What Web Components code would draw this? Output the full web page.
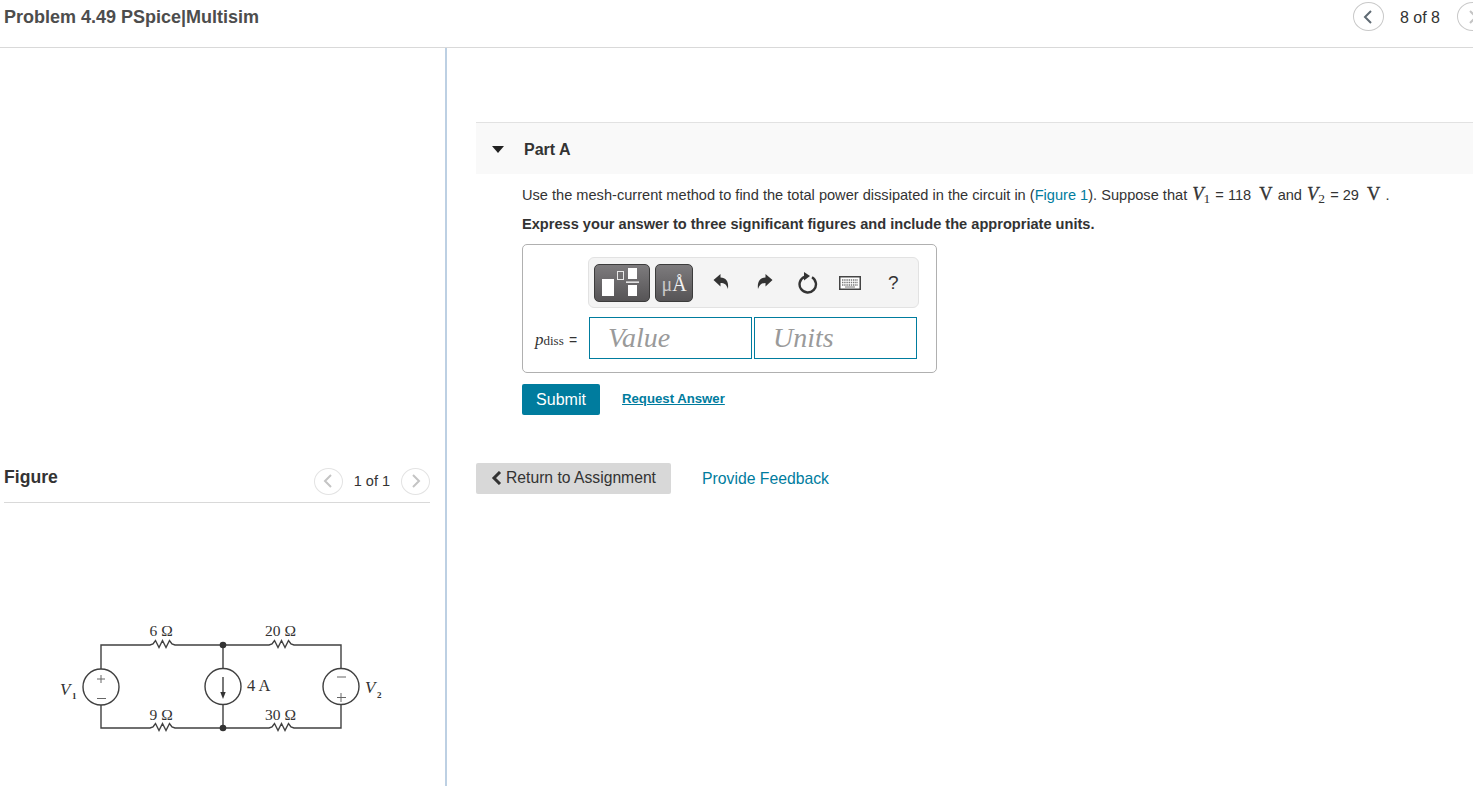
<!DOCTYPE html>
<html>
<head>
<meta charset="utf-8">
<title>Problem 4.49</title>
<style>
  html, body { margin: 0; height: 100%; overflow: hidden; background: #fff; }
  body { font-family: "Liberation Sans", Arial, sans-serif; color: #333; }
</style>
</head>
<body>
<problem-page></problem-page>

<script>
class PagerControl extends HTMLElement {
  connectedCallback() {
    const big = this.hasAttribute('big');
    const prevColor = big ? '#5f6a73' : '#c4c4c4';
    this.attachShadow({ mode: 'open' });
    this.shadowRoot.innerHTML = `
      <style>
        :host { display: flex; align-items: center; }
        .btn {
          box-sizing: border-box;
          width: ${big ? 31 : 29}px;
          height: ${big ? 29 : 27}px;
          border: 1px solid ${big ? '#c9c9c9' : '#e3e3e3'};
          border-radius: 50%;
          background: #fff;
          display: flex;
          align-items: center;
          justify-content: center;
          flex: none;
        }
        .label {
          font-size: ${big ? 16 : 14.5}px;
          color: #333;
          margin: ${big ? '2px 17px 0 16px' : '0 11px'};
          white-space: nowrap;
        }
        svg { display: block; }
      </style>
      <div class="btn"><svg width="10" height="16" viewBox="0 0 10 16"><path d="M8 2 L2 8 L8 14" fill="none" stroke="${prevColor}" stroke-width="2"/></svg></div>
      <span class="label">${this.getAttribute('label')}</span>
      <div class="btn"><svg width="10" height="16" viewBox="0 0 10 16"><path d="M2 2 L8 8 L2 14" fill="none" stroke="#c4c4c4" stroke-width="2"/></svg></div>
    `;
  }
}
customElements.define('pager-control', PagerControl);

class TopBar extends HTMLElement {
  connectedCallback() {
    this.attachShadow({ mode: 'open' });
    this.shadowRoot.innerHTML = `
      <style>
        :host {
          display: flex;
          justify-content: space-between;
          box-sizing: border-box;
          height: 48px;
          padding: 2px 0 0 4px;
          border-bottom: 1px solid #d9d9d9;
          overflow: hidden;
        }
        .title { font-size: 18px; font-weight: bold; color: #4d4d4d; line-height: 31px; white-space: nowrap; }
        pager-control { flex: none; margin-right: -15px; align-self: flex-start; }
      </style>
      <div class="title"><slot></slot></div>
      <pager-control big label="8 of 8"></pager-control>
    `;
  }
}
customElements.define('top-bar', TopBar);

class CircuitFigure extends HTMLElement {
  connectedCallback() {
    // resistor zigzag starting at the wire, drawn relative to its left end
    const zig = 'l3 -1 l2.5 -3.5 l3.5 7 l3.5 -7 l3.5 7 l3.5 -7 l2.5 3.5 l3 1';
    this.attachShadow({ mode: 'open' });
    this.shadowRoot.innerHTML = `
      <style>
        :host { display: block; width: 445px; height: 186px; }
        svg { display: block; }
        text { font-family: "Liberation Serif", "Times New Roman", serif; fill: #333; font-size: 15.5px; }
        .big { font-size: 16.5px; }
        .var { font-style: italic; font-size: 17px; }
        .sub { font-size: 9px; font-weight: bold; }
        .w { fill: none; stroke: #404040; stroke-width: 1.4; }
        .thin { fill: none; stroke: #666; stroke-width: 1; }
      </style>
      <svg width="445" height="186" viewBox="0 600 445 186">
        <path class="w" d="M101 669 V645 H150 ${zig} H269 ${zig} H341 V668"/>
        <path class="w" d="M101 705 V728 H150 ${zig} H269 ${zig} H341 V705"/>
        <path class="w" d="M223 645 V668 M223 705 V728"/>
        <circle class="w" cx="101" cy="687" r="18"/>
        <circle class="w" cx="223" cy="686.5" r="18"/>
        <circle class="w" cx="341" cy="686.5" r="18"/>
        <circle cx="223" cy="645" r="3.3" fill="#333"/>
        <circle cx="223" cy="728" r="3.3" fill="#333"/>
        <path class="thin" d="M97 679 h8 M101 675 v8 M97 698.5 h9 M337 677 h9 M337 697.5 h9 M341 693 v9"/>
        <path class="w" d="M223 677 V696"/>
        <path d="M220.3 692 L223 699 L225.7 692 Z" fill="#333"/>
        <text x="149.5" y="636">6 Ω</text>
        <text x="149.5" y="720">9 Ω</text>
        <text x="265" y="636">20 Ω</text>
        <text x="265" y="720">30 Ω</text>
        <text class="big" x="247" y="691">4 A</text>
        <text class="var" x="60" y="695">V</text>
        <text class="sub" x="72" y="699">1</text>
        <text class="var" x="365" y="693">V</text>
        <text class="sub" x="377" y="698">2</text>
      </svg>
    `;
  }
}
customElements.define('circuit-figure', CircuitFigure);

class FigurePanel extends HTMLElement {
  connectedCallback() {
    this.attachShadow({ mode: 'open' });
    this.shadowRoot.innerHTML = `
      <style>
        :host { display: block; box-sizing: border-box; width: 447px; border-right: 2px solid #bdd0e3; padding-top: 418px; height: 738px; overflow: hidden; }
        .head {
          display: flex;
          justify-content: space-between;
          align-items: center;
          box-sizing: border-box;
          width: 426px;
          margin-left: 4px;
          height: 37px;
          border-bottom: 1px solid #d9d9d9;
          padding-bottom: 6px;
        }
        .name { font-size: 17.6px; font-weight: bold; color: #333; margin-top: -8px; }
        .gap { height: 97px; }
      </style>
      <div class="head">
        <span class="name">Figure</span>
        <pager-control label="1 of 1"></pager-control>
      </div>
      <div class="gap"></div>
      <slot></slot>
    `;
  }
}
customElements.define('figure-panel', FigurePanel);

class MathToolbar extends HTMLElement {
  connectedCallback() {
    this.attachShadow({ mode: 'open' });
    this.shadowRoot.innerHTML = `
      <style>
        :host {
          display: flex;
          align-items: center;
          box-sizing: border-box;
          width: 331px;
          height: 51px;
          background: #f4f4f4;
          border: 1px solid #e2e2e2;
          border-radius: 6px;
          padding-left: 5px;
        }
        .tool {
          box-sizing: border-box;
          height: 38px;
          border: 1px solid #3c3c3c;
          border-radius: 5px;
          background: linear-gradient(#7d7b7d, #565456);
          display: flex;
          align-items: center;
          justify-content: center;
          flex: none;
        }
        .t1 { width: 56px; margin-right: 5px; }
        .t2 { width: 38px; margin-right: 20px; padding-top: 4px; color: #f2f2f2; font-family: "Liberation Serif", serif; font-size: 20px; }
        .t2 span { color: #c8c8c8; }
        .icon { flex: none; display: block; }
        .q { font-size: 19px; color: #333; margin-left: 27px; }
      </style>
      <div class="tool t1">
        <svg width="46" height="32" viewBox="0 0 46 32" class="icon">
          <rect x="3" y="12" width="12" height="17" fill="#fff"/>
          <rect x="18.5" y="4.5" width="6" height="8" fill="none" stroke="#e8e8e8" stroke-width="1"/>
          <rect x="29" y="1" width="9" height="11" fill="#fff"/>
          <rect x="27" y="14.5" width="13" height="1.3" fill="#fff"/>
          <rect x="29" y="18" width="9" height="11" fill="#fff"/>
        </svg>
      </div>
      <div class="tool t2"><span>μ</span>Å</div>
      <svg class="icon" width="16" height="17" viewBox="0 0 16 17" style="margin:-3px 28px 0 0"><path d="M0.5 7 L7.5 1 V4.6 C12.5 4.6 16 8 15 16 C13.5 11.5 11.5 10 7.5 10 V13.5 Z" fill="#333"/></svg>
      <svg class="icon" width="16" height="17" viewBox="0 0 16 17" style="margin:-3px 25px 0 0"><path d="M15.5 7 L8.5 1 V4.6 C3.5 4.6 0 8 1 16 C2.5 11.5 4.5 10 8.5 10 V13.5 Z" fill="#333"/></svg>
      <svg class="icon" width="20" height="24" viewBox="0 0 20 24" style="margin-right:21px"><path d="M6.5 5.8 A8.2 8.2 0 1 0 14 6.3" fill="none" stroke="#333" stroke-width="2.4"/><path d="M6 1 L12 5 L6 9.5 Z" fill="#333"/></svg>
      <svg class="icon" width="22" height="14" viewBox="0 0 22 14"><rect x="0.75" y="0.75" width="20.5" height="12.5" fill="#fff" stroke="#444" stroke-width="1.5"/><path d="M3 4 h16 M3 6.5 h16 M3 9 h16" stroke="#777" stroke-width="1.3" stroke-dasharray="1.4 .8"/><path d="M6 11 h10" stroke="#777" stroke-width="1"/></svg>
      <span class="q">?</span>
    `;
  }
}
customElements.define('math-toolbar', MathToolbar);

class AnswerBox extends HTMLElement {
  connectedCallback() {
    this.attachShadow({ mode: 'open' });
    this.shadowRoot.innerHTML = `
      <style>
        :host {
          display: block;
          box-sizing: border-box;
          width: 415px;
          height: 129px;
          border: 1px solid #b0b0b0;
          border-radius: 5px;
          padding: 12px 0 0 65px;
        }
        .row { display: flex; align-items: center; margin: 9px 0 0 -53px; }
        .lbl {
          font-family: "Liberation Serif", serif;
          font-size: 13px;
          color: #333;
          width: 54px;
          margin-top: 3px;
          white-space: nowrap;
        }
        .lbl i { font-size: 17px; }
        .lbl .eq { font-family: "Liberation Sans", sans-serif; font-size: 14px; margin-left: 2px; }
        .field {
          box-sizing: border-box;
          width: 163px;
          height: 42px;
          border: 1px solid #007c9e;
          margin-right: 2px;
          padding: 1px 0 0 18px;
          font-family: "Liberation Serif", serif;
          font-style: italic;
          font-size: 28px;
          line-height: 38px;
          color: #9a9a9a;
        }
      </style>
      <math-toolbar></math-toolbar>
      <div class="row">
        <span class="lbl"><i>p</i>diss <span class="eq">=</span></span>
        <div class="field">Value</div>
        <div class="field">Units</div>
      </div>
    `;
  }
}
customElements.define('answer-box', AnswerBox);

class PartSection extends HTMLElement {
  connectedCallback() {
    this.attachShadow({ mode: 'open' });
    this.shadowRoot.innerHTML = `
      <style>
        :host { display: block; padding-top: 74px; flex: 1; min-width: 0; overflow: hidden; height: 738px; box-sizing: border-box; padding-left: 29px; }
        .bar {
          display: flex;
          align-items: center;
          box-sizing: border-box;
          height: 52px;
          background: #f9f9f9;
          border-top: 1px solid #e2e2e2;
          padding: 2px 0 0 16px;
          font-size: 16px;
          font-weight: bold;
          color: #333;
        }
        .tri { width: 0; height: 0; border: 6px solid transparent; border-top: 7px solid #222; border-bottom: 0; margin-right: 20px; margin-top: -1px; }
        .body { padding: 9px 0 0 46px; }
        p { margin: 0; font-size: 14.6px; line-height: 22px; color: #333; white-space: nowrap; }
        .strong { font-weight: bold; margin: 7px 0 9px; }
        .link { color: #007c9e; }
        .m { font-family: "Liberation Serif", serif; font-size: 18.5px; -webkit-text-stroke: .3px #333; }
        .m i { font-style: italic; margin-left: 1px; }
        .v { margin-right: 1px; }
        sub { font-size: 13.5px; line-height: 0; vertical-align: -3px; -webkit-text-stroke: 0; }
        .u { margin: 0 5px 0 4px; }
        .actions { display: flex; align-items: center; margin-top: 11px; }
        .submit {
          box-sizing: border-box;
          width: 78px;
          height: 31px;
          background: #007c9e;
          color: #fff;
          font-size: 16px;
          border-radius: 2px;
          display: flex;
          align-items: center;
          justify-content: center;
        }
        .req { margin: -2px 0 0 22px; font-size: 13.2px; font-weight: bold; color: #007c9e; text-decoration: underline; }
        .foot { display: flex; align-items: center; margin: 48px 0 0 -46px; }
        .back {
          box-sizing: border-box;
          width: 195px;
          height: 31px;
          background: #d8d8d8;
          border-radius: 2px;
          font-size: 15.7px;
          color: #333;
          display: flex;
          align-items: center;
          padding: 0 0 2px 15px;
          white-space: nowrap;
        }
        .back svg { margin-right: 4px; }
        .fb { margin-left: 31px; font-size: 15.75px; color: #007c9e; }
      </style>
      <div class="bar"><span class="tri"></span>Part A</div>
      <div class="body">
        <p>Use the mesh-current method to find the total power dissipated in the circuit in (<span class="link">Figure 1</span>). Suppose that <span class="m v"><i>V</i><sub>1</sub></span> = 118 <span class="m u">V</span>and <span class="m v"><i>V</i><sub>2</sub></span> = 29 <span class="m u">V</span>.</p>
        <p class="strong">Express your answer to three significant figures and include the appropriate units.</p>
        <answer-box></answer-box>
        <div class="actions">
          <div class="submit">Submit</div>
          <span class="req">Request Answer</span>
        </div>
        <div class="foot">
          <div class="back"><svg width="11" height="14" viewBox="0 0 11 14"><path d="M9 1 L3 7 L9 13" fill="none" stroke="#333" stroke-width="3"/></svg>Return to Assignment</div>
          <span class="fb">Provide Feedback</span>
        </div>
      </div>
    `;
  }
}
customElements.define('part-section', PartSection);

class ProblemPage extends HTMLElement {
  connectedCallback() {
    this.attachShadow({ mode: 'open' });
    this.shadowRoot.innerHTML = `
      <style>
        :host { display: block; height: 786px; overflow: hidden; }
        .cols { display: flex; }
      </style>
      <top-bar>Problem 4.49 PSpice|Multisim</top-bar>
      <div class="cols">
        <figure-panel><circuit-figure></circuit-figure></figure-panel>
        <part-section></part-section>
      </div>
    `;
  }
}
customElements.define('problem-page', ProblemPage);
</script>
</body>
</html>
